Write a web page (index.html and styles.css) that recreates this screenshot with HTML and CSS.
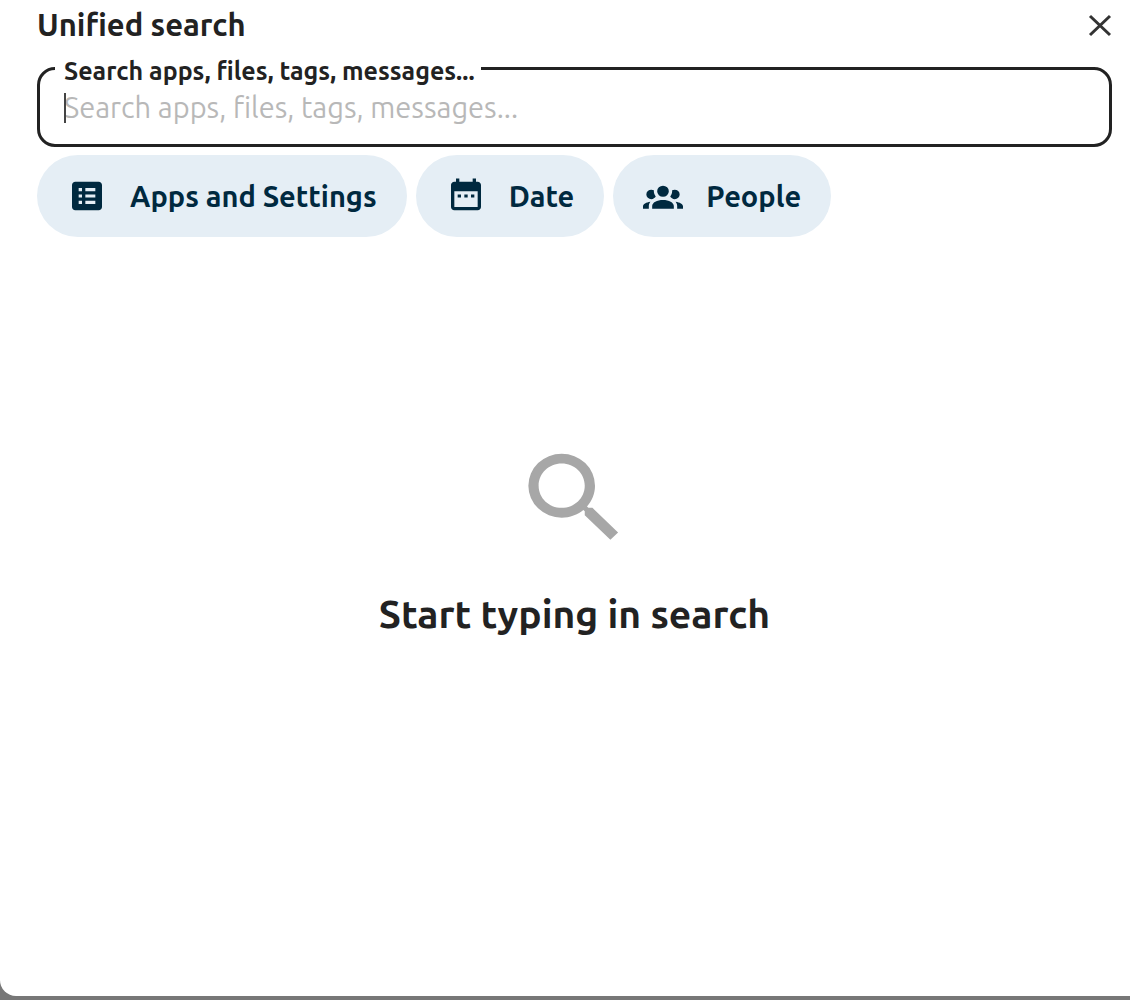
FILE: index.html
```html
<!DOCTYPE html>
<html lang="en">
<head>
<meta charset="utf-8">
<meta name="viewport" content="width=device-width, initial-scale=1">
<title>Unified search</title>
<link rel="stylesheet" href="styles.css">
</head>
<body>
<main class="modal" role="dialog" aria-labelledby="modal-title">
  <header class="modal-header">
    <h1 class="modal-title" id="modal-title">Unified search</h1>
    <button class="close-button" type="button" aria-label="Close">
      <svg class="close-icon" viewBox="0 0 24 24" aria-hidden="true"><path d="M2 3L22 22M22 3L2 22"/></svg>
    </button>
  </header>
  <div class="search-field">
    <label class="search-label" for="search">Search apps, files, tags, messages...</label>
    <input class="search-input" id="search" type="text" placeholder="Search apps, files, tags, messages...">
    <span class="caret" aria-hidden="true"></span>
  </div>
  <div class="filters">
    <button class="filter" type="button">
      <svg class="filter-icon" viewBox="0 0 24 24" preserveAspectRatio="none" aria-hidden="true"><path d="M19 3H5C3.9 3 3 3.9 3 5V19C3 20.1 3.9 21 5 21H19C20.1 21 21 20.1 21 19V5C21 3.9 20.1 3 19 3M7 7H9V9H7V7M7 11H9V13H7V11M7 15H9V17H7V15M17 17H11V15H17V17M17 13H11V11H17V13M17 9H11V7H17V9Z"/></svg>
      <span>Apps and Settings</span>
    </button>
    <button class="filter" type="button">
      <svg class="filter-icon" viewBox="0 0 24 24" preserveAspectRatio="none" aria-hidden="true"><path d="M7 11H9V13H7V11M21 5V19C21 20.1 20.1 21 19 21H5C3.9 21 3 20.1 3 19V5C3 3.9 3.9 3 5 3H6V1H8V3H16V1H18V3H19C20.1 3 21 3.9 21 5M5 19H19V9H5V19M15 13V11H17V13H15M11 13V11H13V13H11Z"/></svg>
      <span>Date</span>
    </button>
    <button class="filter" type="button">
      <svg class="filter-icon" viewBox="0 0 24 24" preserveAspectRatio="none" aria-hidden="true"><path d="M12,5.5A3.5,3.5 0 0,1 15.5,9A3.5,3.5 0 0,1 12,12.5A3.5,3.5 0 0,1 8.5,9A3.5,3.5 0 0,1 12,5.5M5,8C5.56,8 6.08,8.15 6.53,8.42C6.38,9.85 6.8,11.27 7.66,12.38C7.16,13.34 6.16,14 5,14A3,3 0 0,1 2,11A3,3 0 0,1 5,8M19,8A3,3 0 0,1 22,11A3,3 0 0,1 19,14C17.84,14 16.84,13.34 16.34,12.38C17.2,11.27 17.62,9.85 17.47,8.42C17.92,8.15 18.44,8 19,8M5.5,18.25C5.5,16.18 8.41,14.5 12,14.5C15.59,14.5 18.5,16.18 18.5,18.25V20H5.5V18.25M0,20V18.5C0,17.11 1.89,15.94 4.45,15.6C3.86,16.28 3.5,17.22 3.5,18.25V20H0M24,20H20.5V18.25C20.5,17.22 20.14,16.28 19.55,15.6C22.11,15.94 24,17.11 24,18.5V20Z"/></svg>
      <span>People</span>
    </button>
  </div>
  <section class="empty">
    <svg class="empty-icon" viewBox="0 0 24 24" preserveAspectRatio="none" aria-hidden="true"><path d="M9.5,3A6.5,6.5 0 0,1 16,9.5C16,11.11 15.41,12.59 14.44,13.73L14.71,14H15.5L20.5,19L19,20.5L14,15.5V14.71L13.73,14.44C12.59,15.41 11.11,16 9.5,16A6.5,6.5 0 0,1 3,9.5A6.5,6.5 0 0,1 9.5,3M9.5,5C7,5 5,7 5,9.5C5,12 7,14 9.5,14C12,14 14,12 14,9.5C14,7 12,5 9.5,5Z"/></svg>
    <h2 class="empty-title">Start typing in search</h2>
  </section>
</main>
</body>
</html>
```
FILE: styles.css
```css
* {
  box-sizing: border-box;
}

body {
  margin: 0;
  min-height: 100vh;
  padding-bottom: 4px;
  background: #777;
  color: #222;
  font-family: Ubuntu, "Noto Sans", sans-serif;
}

button,
input {
  font: inherit;
  color: inherit;
}

.modal {
  display: flex;
  flex-direction: column;
  min-height: calc(100vh - 4px);
  padding: 0 18px 0 37px;
  background: #fff;
  border-bottom-left-radius: 16px;
}

.modal-header {
  display: flex;
  align-items: center;
  justify-content: space-between;
  height: 50px;
}

.modal-title {
  margin: 0;
  font-size: 31px;
  font-weight: 700;
  line-height: 48px;
}

.close-button {
  display: flex;
  padding: 0;
  border: 0;
  background: none;
}

.close-icon {
  width: 24px;
  height: 24px;
  fill: none;
  stroke: #333;
  stroke-width: 3;
}

.search-field {
  position: relative;
  margin-top: 17px;
}

.search-label {
  position: absolute;
  top: -10px;
  left: 18px;
  padding: 0 6px 0 9px;
  background: #fff;
  font-size: 25px;
  font-weight: 600;
  line-height: 28px;
}

.search-input {
  display: block;
  width: 100%;
  height: 80px;
  padding: 0 24px;
  border: 3px solid #222;
  border-radius: 18px;
  background: #fff;
  font-size: 29px;
  line-height: 40px;
  outline: 0;
}

.search-input::placeholder {
  color: #b8b8b8;
  opacity: 1;
  overflow: visible;
}

.caret {
  position: absolute;
  top: 26px;
  left: 27px;
  width: 2px;
  height: 30px;
  background: #444;
}

.filters {
  display: flex;
  flex-wrap: wrap;
  gap: 9px;
  margin-top: 8px;
}

.filter {
  display: flex;
  align-items: center;
  gap: 23px;
  height: 82px;
  padding: 0 30px;
  border: 0;
  border-radius: 41px;
  background: #e5eef5;
  color: #00293f;
  font-size: 29px;
  font-weight: 700;
}

.filter-icon {
  width: 40px;
  height: 38px;
  fill: currentColor;
}

.empty {
  display: flex;
  flex-direction: column;
  align-items: center;
  margin-top: 202px;
}

.empty-icon {
  width: 123px;
  height: 118px;
  fill: #a7a7a7;
}

.empty-title {
  margin: 32px 0 0;
  font-size: 39px;
  line-height: 50px;
}
```
